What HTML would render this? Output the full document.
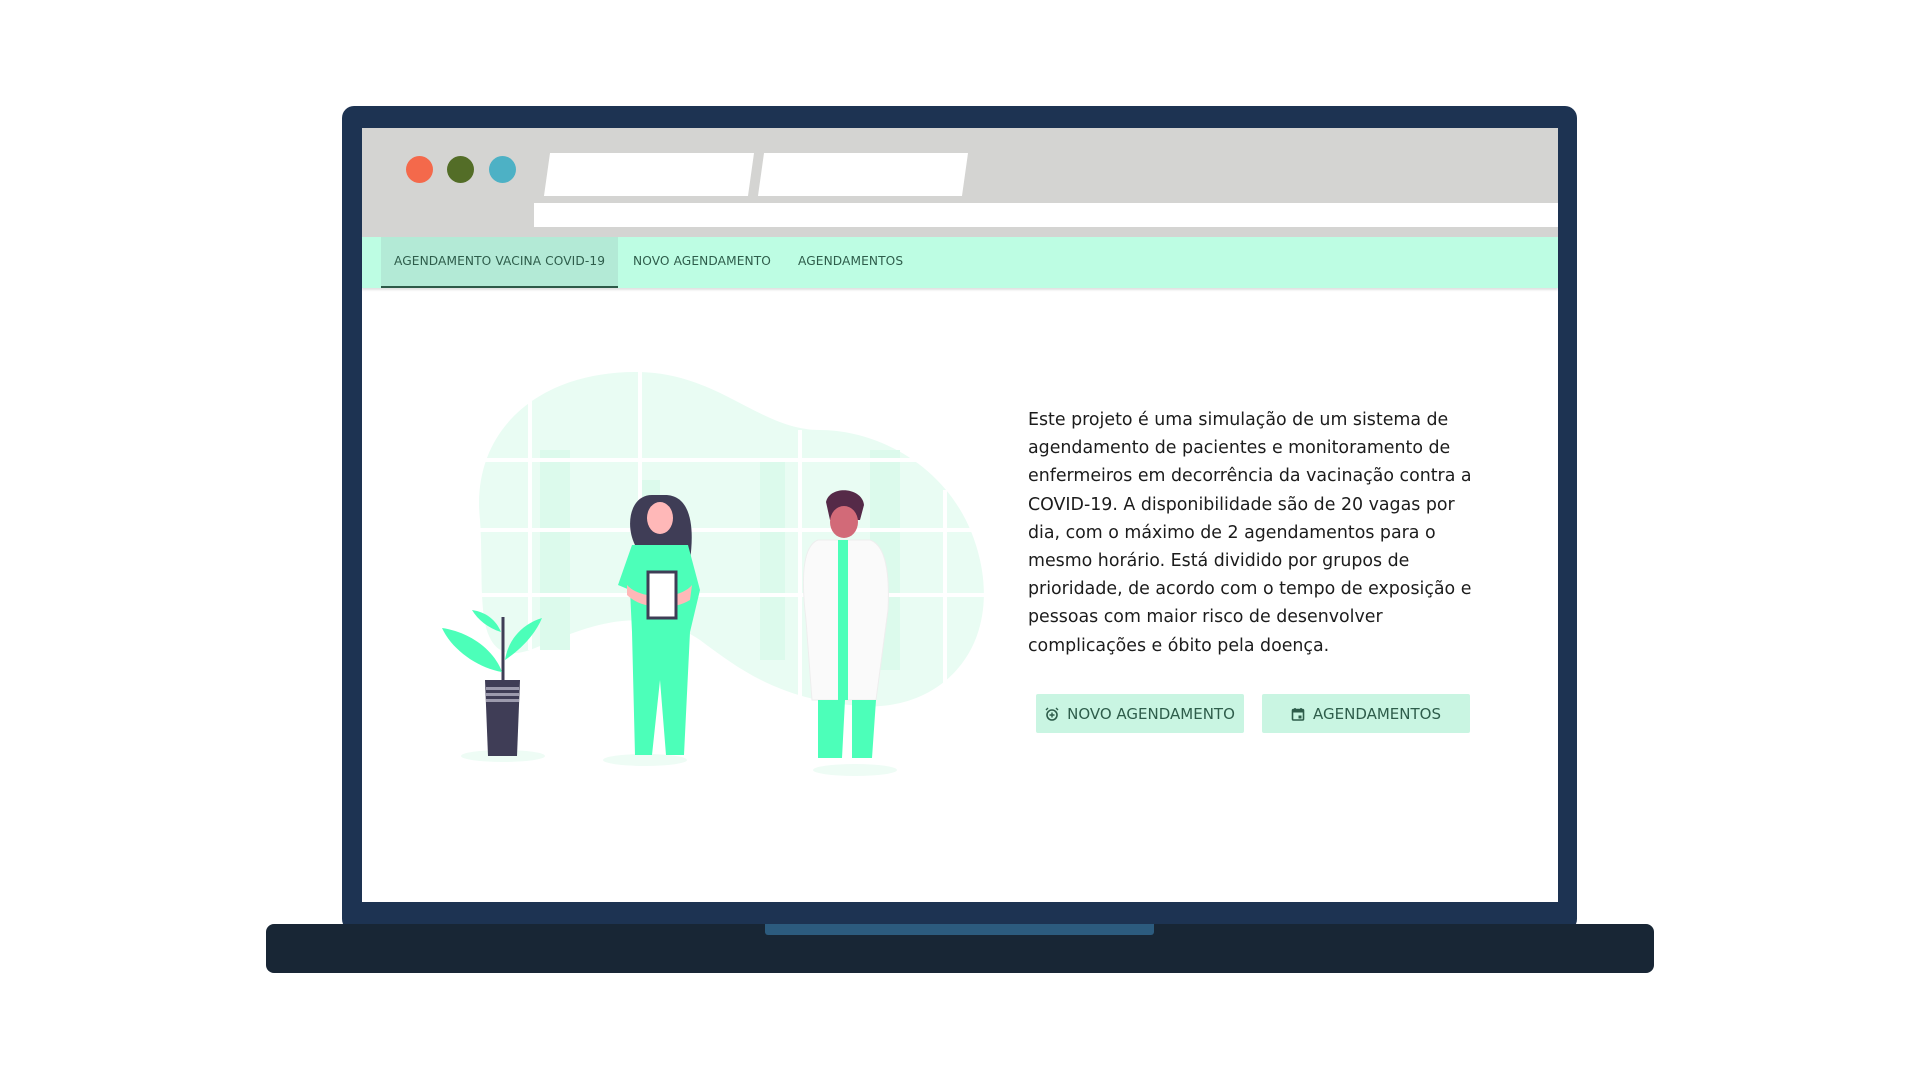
<!DOCTYPE html>
<html><head><meta charset="utf-8"><style>
*{margin:0;padding:0;box-sizing:border-box}
body{width:1920px;height:1080px;background:#fff;position:relative;overflow:hidden;font-family:"DejaVu Sans","Liberation Sans",sans-serif}
.abs{position:absolute}
.frame{left:342px;top:106px;width:1235px;height:825px;background:#1d3352;border-radius:12px}
.screen{left:362px;top:128px;width:1196px;height:774px;background:#fff}
.base{left:266px;top:924px;width:1388px;height:49px;background:#182635;border-radius:8px}
.notch{left:765px;top:924px;width:389px;height:11px;background:#2c5b7e;border-radius:0 0 3px 3px}
.gray{left:362px;top:128px;width:1196px;height:109px;background:#d4d4d2}
.dot{width:27px;height:27px;border-radius:50%;top:156px}
.tab{top:153px;height:43px;background:#fff;transform:skewX(-8deg)}
.url{left:534px;top:203px;width:1024px;height:24px;background:#fff}
.nav{left:362px;top:237px;width:1196px;height:51px;background:#bdfde3;box-shadow:0 2px 2px rgba(0,0,0,.12)}
.active{left:381px;top:237px;width:237px;height:51px;background:#b3ead6;border-bottom:2px solid #2d5a48}
.nt{top:254px;font-size:12.2px;color:#2e5d4b;letter-spacing:.1px}
.para{left:1028px;top:406px;font-size:17.4px;line-height:28.2px;color:#1c1c1c;white-space:nowrap}
.btn{top:694px;height:39px;width:208px;background:#c9f5e2;border-radius:2px;color:#2e5d4b;font-size:15px;display:flex;align-items:center;justify-content:center;gap:8px}
</style></head><body>
<div class="abs frame"></div>
<div class="abs screen"></div>
<div class="abs base"></div>
<div class="abs notch"></div>
<div class="abs gray"></div>
<div class="abs dot" style="left:406px;background:#f4694b"></div>
<div class="abs dot" style="left:447px;background:#536d27"></div>
<div class="abs dot" style="left:489px;background:#4db1c5"></div>
<div class="abs tab" style="left:547px;width:204px"></div>
<div class="abs tab" style="left:761px;width:204px"></div>
<div class="abs url"></div>
<div class="abs nav"></div>
<div class="abs active"></div>
<div class="abs nt" style="left:394px">AGENDAMENTO VACINA COVID-19</div>
<div class="abs nt" style="left:633px">NOVO AGENDAMENTO</div>
<div class="abs nt" style="left:798px">AGENDAMENTOS</div>

<svg class="abs" style="left:0;top:0" width="1920" height="1080">
<path d="M480 520 C470 430 540 370 640 372 C720 374 760 430 820 430 C880 430 960 470 980 560 C1000 650 940 712 860 706 C780 700 740 670 700 640 C640 600 580 630 530 650 C470 670 485 590 480 520Z" fill="#e9fcf3"/>
<g fill="#dcfaec"><rect x="540" y="450" width="30" height="200"/><rect x="640" y="480" width="20" height="120"/><rect x="760" y="460" width="25" height="200"/><rect x="870" y="450" width="30" height="220"/></g>
<g stroke="#fff" stroke-width="4"><line x1="530" y1="372" x2="530" y2="650"/><line x1="640" y1="372" x2="640" y2="640"/><line x1="800" y1="430" x2="800" y2="706"/><line x1="945" y1="490" x2="945" y2="700"/><line x1="478" y1="460" x2="985" y2="460"/><line x1="478" y1="530" x2="985" y2="530"/><line x1="478" y1="595" x2="985" y2="595"/></g>
<ellipse cx="503" cy="756" rx="42" ry="6" fill="#eefcf5"/><ellipse cx="645" cy="760" rx="42" ry="6" fill="#eefcf5"/><ellipse cx="855" cy="770" rx="42" ry="6" fill="#eefcf5"/>
<!-- plant -->
<line x1="503" y1="617" x2="503" y2="680" stroke="#3f3d56" stroke-width="3"/>
<path d="M502 672 C478 668 452 650 442 628 C470 632 494 650 502 672Z" fill="#4cffb9"/>
<path d="M505 660 C520 650 535 635 542 618 C522 624 508 640 505 660Z" fill="#4cffb9"/>
<path d="M501 632 C488 628 478 620 472 610 C486 612 496 620 501 632Z" fill="#4cffb9"/>
<path d="M485 680 L520 680 L517 756 L488 756Z" fill="#3f3d56"/>
<g fill="#9c9aad"><rect x="486" y="687" width="33" height="3"/><rect x="486" y="693" width="33" height="3"/><rect x="486" y="699" width="33" height="3"/></g>
<!-- nurse -->
<path d="M652 495 C630 495 625 525 635 545 L690 560 C695 525 690 495 665 495Z" fill="#3f3d56"/>
<ellipse cx="660" cy="518" rx="13" ry="16" fill="#ffb8b8"/>
<path d="M632 545 L688 545 L700 590 L690 632 L632 632 L630 590 L618 585Z" fill="#4cffb9"/>
<path d="M627 585 C640 600 680 600 692 585 L690 600 C670 612 640 608 627 595Z" fill="#ffb8b8"/>
<rect x="648" y="572" width="28" height="46" fill="#fff" stroke="#3f3d56" stroke-width="3"/>
<path d="M632 632 L690 632 L684 755 L666 755 L660 680 L652 755 L635 755Z" fill="#4cffb9"/>
<!-- doctor -->
<path d="M826 502 C830 485 862 487 864 505 L860 520 L830 520Z" fill="#552a48"/>
<ellipse cx="844" cy="522" rx="14" ry="16" fill="#d26a78"/>
<path d="M818 540 L870 540 C885 545 890 570 888 610 L876 700 L812 700 L806 620 C800 570 805 545 818 540Z" fill="#fafafa" stroke="#eee"/>
<rect x="838" y="540" width="10" height="160" fill="#4cffb9"/>
<path d="M818 700 L845 700 L842 758 L818 758Z M852 700 L876 700 L872 758 L852 758Z" fill="#4cffb9"/>
</svg>

<div class="abs para">Este projeto é uma simulação de um sistema de<br>agendamento de pacientes e monitoramento de<br>enfermeiros em decorrência da vacinação contra a<br>COVID-19. A disponibilidade são de 20 vagas por<br>dia, com o máximo de 2 agendamentos para o<br>mesmo horário. Está dividido por grupos de<br>prioridade, de acordo com o tempo de exposição e<br>pessoas com maior risco de desenvolver<br>complicações e óbito pela doença.</div>

<div class="abs btn" style="left:1036px"><svg width="14" height="14" viewBox="0 0 14 14"><circle cx="7" cy="8" r="5" fill="none" stroke="#2e5d4b" stroke-width="1.6"/><path d="M7 5.5v5M4.5 8h5M1 3l2-2M13 3l-2-2" stroke="#2e5d4b" stroke-width="1.4"/></svg>NOVO AGENDAMENTO</div>
<div class="abs btn" style="left:1262px"><svg width="14" height="14" viewBox="0 0 14 14"><rect x="1.5" y="2.5" width="11" height="10.5" rx="1" fill="none" stroke="#2e5d4b" stroke-width="1.6"/><rect x="1.5" y="2.5" width="11" height="3" fill="#2e5d4b"/><rect x="7.5" y="8.5" width="3" height="3" fill="#2e5d4b"/><path d="M4 1v3M10 1v3" stroke="#2e5d4b" stroke-width="1.5"/></svg>AGENDAMENTOS</div>
</body></html>
